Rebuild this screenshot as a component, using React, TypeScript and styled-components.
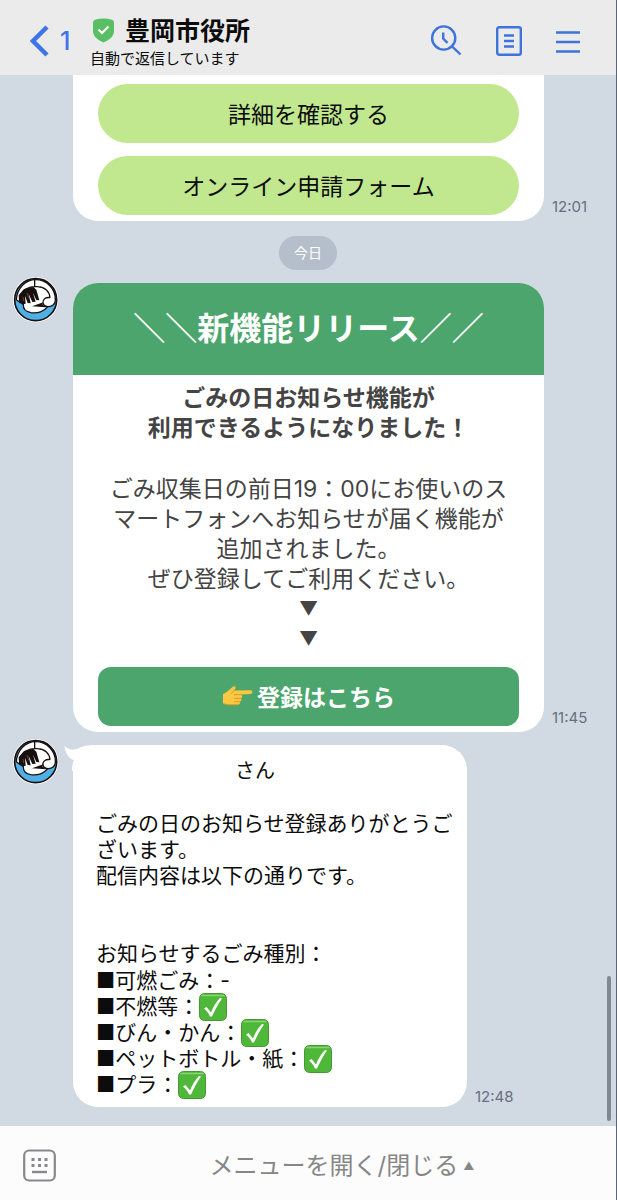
import React from "react";
import styled, { createGlobalStyle } from "styled-components";

const GlobalStyle = createGlobalStyle`
  * { box-sizing: border-box; }
  body {
    margin: 0;
    background: #d1d9e3;
    font-family: Inter, "Noto Sans CJK JP", sans-serif;
    color: #0c0c0c;
  }
  button {
    border: 0;
    padding: 0;
    background: none;
    color: inherit;
    font: inherit;
    cursor: pointer;
  }
  h1, p, ul { margin: 0; padding: 0; }
  svg { display: block; flex: none; }
`;

const Screen = styled.div`
  position: relative;
  display: flex;
  flex-direction: column;
  min-height: 100vh;
  background: #d1d9e3;
  border-right: 1px solid #5c6573;
`;

const Header = styled.header`
  display: flex;
  align-items: center;
  height: 75px;
  padding: 6px 36px 0 30px;
  background: #ebebeb;
`;

const BackButton = styled.button`
  display: flex;
  align-items: center;
  gap: 11px;
  width: 60px;
  font-size: 25px;
  font-weight: 500;
  line-height: 32px;
  color: #3d74e8;
`;

const Account = styled.div`
  flex: 1;
  min-width: 0;
  padding-top: 4px;
`;

const TitleRow = styled.div`
  display: flex;
  align-items: center;
  gap: 10px;
  padding-left: 2px;
`;

const Title = styled.h1`
  font-size: 25px;
  font-weight: 700;
  line-height: 32px;
  white-space: nowrap;
`;

const Subtitle = styled.p`
  font-size: 15px;
  line-height: 24px;
  white-space: nowrap;
`;

const Actions = styled.nav`
  display: flex;
  align-items: center;
  gap: 34px;
`;

const IconButton = styled.button`
  display: flex;
`;

const Chat = styled.main`
  flex: 1;
  padding-bottom: 19px;
`;

const MessageRow = styled.div<{ $gap?: number }>`
  display: flex;
  align-items: stretch;
  margin-top: ${(p) => p.$gap ?? 0}px;
`;

const AvatarSlot = styled.div`
  flex: none;
  width: 73px;
  padding-left: 13px;
`;

const Card = styled.section<{ $continued?: boolean }>`
  flex: 1;
  min-width: 0;
  margin-top: ${(p) => (p.$continued ? 0 : 6)}px;
  padding-bottom: 6px;
  overflow: hidden;
  background: #fff;
  border-radius: ${(p) => (p.$continued ? "0 0 25px 25px" : "25px")};
`;

const CardActions = styled.div`
  display: flex;
  flex-direction: column;
  gap: 13px;
  padding: 9px 25px 0;
`;

const PillButton = styled.button`
  height: 59px;
  padding-bottom: 2px;
  border-radius: 30px;
  background: #c1e88f;
  font-size: 23px;
`;

const Time = styled.time<{ $inset?: number }>`
  flex: none;
  align-self: flex-end;
  width: 72px;
  padding: 0 0 ${(p) => p.$inset ?? 5}px 8px;
  font-size: 15px;
  line-height: 18px;
  color: #66707e;
`;

const DateChip = styled.div`
  width: 58px;
  margin: 15px auto 0;
  border-radius: 17px;
  background: #b5becb;
  color: #fff;
  font-size: 14px;
  line-height: 34px;
  text-align: center;
`;

const Banner = styled.div`
  height: 92px;
  background: #4ba56d;
  color: #fff;
  font-size: 32px;
  font-weight: 700;
  line-height: 92px;
  text-align: center;
  white-space: nowrap;
`;

const CardText = styled.div`
  padding: 8px 25px 13px;
  color: #444;
  font-size: 23px;
  line-height: 30px;
  text-align: center;
`;

const Lead = styled.p`
  margin-bottom: 31px;
  font-weight: 700;
`;

const Arrow = styled.p`
  font-size: 19px;
`;

const RegisterButton = styled.button`
  display: flex;
  align-items: center;
  justify-content: center;
  gap: 4px;
  width: calc(100% - 50px);
  height: 59px;
  margin: 0 25px;
  padding-bottom: 2px;
  border-radius: 13px;
  background: #4ba56d;
  color: #fff;
  font-size: 23px;
  font-weight: 700;
`;

const Bubble = styled.section`
  position: relative;
  flex: 0 1 394px;
  margin-top: 6px;
  padding: 13px 8px 9px 23px;
  background: #fff;
  border-radius: 25px;
  font-size: 21px;
  line-height: 26px;
`;

const Tail = styled.svg`
  position: absolute;
  top: 0;
  left: -9px;
`;

const NameLine = styled.p`
  padding-left: 139px;
  font-size: 20px;
`;

const Notice = styled.p`
  margin: 27px 0 52px;
`;

const WasteList = styled.ul`
  padding-top: 1px;
  list-style: none;
`;

const WasteItem = styled.li`
  display: flex;
  align-items: center;
  height: 26px;
  white-space: nowrap;
`;

const ScrollThumb = styled.div`
  position: absolute;
  right: 5px;
  bottom: 79px;
  width: 4px;
  height: 145px;
  border-radius: 2px;
  background: #7f8894;
`;

const Footer = styled.footer`
  display: flex;
  align-items: center;
  height: 74px;
  padding-left: 23px;
  padding-top: 4px;
  background: #fcfcfd;
  color: #868686;
`;

const MenuToggle = styled.button`
  flex: 1;
  display: flex;
  align-items: center;
  justify-content: center;
  gap: 5px;
  padding: 2px 0 0 12px;
  font-size: 24px;
  line-height: 36px;
`;

const SmallMark = styled.span`
  font-size: 11px;
`;

const Avatar = () => (
  <svg width="46" height="46" viewBox="0 0 138 138" role="img" aria-label="豊岡市役所">
    <circle cx="68" cy="68" r="68" fill="#fff" />
    <circle cx="68" cy="68" r="63" fill="#4fb0e6" />
    <path
      d="M10 68C12 36 36 8 68 8C102 8 128 36 127 68C128 80 118 90 104 89C94 103 74 110 54 107C38 104 30 94 31 82L18 74Z"
      fill="#fff"
      stroke="#17100f"
      strokeWidth="4"
    />
    <path d="M65 7V30M22 54C32 36 52 27 74 29C96 30 110 44 111 62" fill="none" stroke="#17100f" strokeWidth="4" />
    <path d="M111 62C98 60 88 67 90 78C92 86 98 89 106 89" fill="none" stroke="#17100f" strokeWidth="4" />
    <path
      d="M17 55L33 36L60 29L70 38L79 70L70 69L60 47L68 74L58 75L47 51L53 79L44 78L36 56L38 80L29 82L18 76Z"
      fill="#17100f"
    />
    <path d="M30 60L32 72M42 48L47 64" stroke="#8a5a44" strokeWidth="2" />
    <path d="M57 88L91 76L88 82L98 91Z" fill="#17100f" />
    <circle cx="68" cy="68" r="63" fill="none" stroke="#17100f" strokeWidth="5" />
  </svg>
);

const Check = () => (
  <svg width="28" height="28" viewBox="0 0 28 28" role="img" aria-label="済">
    <rect x="0.5" y="0.5" width="27" height="27" rx="5" fill="#4fb83a" stroke="#45992f" />
    <path d="M3 2.5H25" stroke="#8ad475" strokeWidth="1.5" strokeLinecap="round" />
    <path d="M5 15.500L7.500 14L12 19.500C14 14 17 9 21 5L23 5.500C19 11 16 17 13 23.500H11C9.500 20 7.500 17.800 5 15.500Z" fill="#fff" />
  </svg>
);

const Hand = () => (
  <svg width="31" height="21" viewBox="0 0 31 21" aria-hidden="true">
    <path
      d="M1 9C4 8 7 5 10 2.500C12 .5 14 1 13.500 3C13.200 4.500 12 5 12 5.500L28.500 5.200C31 5.200 31 8.800 28.500 9L19 9.500C20.500 10.500 20.500 12.500 19 13.200C20 14.500 19.500 16 18 16.600C18.500 18.500 17.500 19.800 15.500 19.800H8C5 19.800 3 19 1 18.500Z"
      fill="#fcc842"
    />
    <path d="M12 5.500C11 7 10 8 9 8.600M12 9.700H19M12 13.300H19M12 16.700H18M1 18.500C4 19.500 6 19.800 9 19.800H15.500" fill="none" stroke="#dc972e" strokeWidth="1" />
  </svg>
);

const wasteTypes = [
  { name: "可燃ごみ", enabled: false },
  { name: "不燃等", enabled: true },
  { name: "びん・かん", enabled: true },
  { name: "ペットボトル・紙", enabled: true },
  { name: "プラ", enabled: true },
];

export default function App() {
  return (
    <Screen lang="ja">
      <GlobalStyle />
      <Header>
        <BackButton aria-label="戻る">
          <svg width="19" height="32" viewBox="0 0 19 32" fill="none" stroke="currentColor" strokeWidth="4.500">
            <path d="M17 2L3 16L17 30" />
          </svg>
          1
        </BackButton>
        <Account>
          <TitleRow>
            <svg width="23" height="25" viewBox="0 0 23 25">
              <path d="M3 1.800Q11.500 -1 20 1.800Q22 2.400 22 4.500V13C22 18.500 17 22 11.500 24.500C6 22 1 18.500 1 13V4.500Q1 2.400 3 1.800Z" fill="#58bf63" />
              <path d="M6.500 11.500L10 15L16.500 8.500" fill="none" stroke="#fff" strokeWidth="2.200" />
            </svg>
            <Title>豊岡市役所</Title>
          </TitleRow>
          <Subtitle>自動で返信しています</Subtitle>
        </Account>
        <Actions>
          <IconButton aria-label="検索">
            <svg width="32" height="32" viewBox="0 0 32 32" fill="none" stroke="#3d74dc" strokeWidth="2.400">
              <circle cx="13.700" cy="13" r="11.600" />
              <path d="M22 21.300L30.500 29.500M13.200 7.500V13.500L17.500 17.800" />
            </svg>
          </IconButton>
          <IconButton aria-label="ノート">
            <svg width="26" height="30" viewBox="0 0 26 30" fill="none" stroke="#3d74dc" strokeWidth="2.400">
              <rect x="1.200" y="1.200" width="23.600" height="27.600" rx="2" />
              <path d="M8 9.500H18M8 15H18M8 20.500H18" />
            </svg>
          </IconButton>
          <IconButton aria-label="メニュー">
            <svg width="24" height="24" viewBox="0 0 24 24" fill="none" stroke="#3d74dc" strokeWidth="2.600">
              <path d="M0 3.500H24M0 13H24M0 22.500H24" />
            </svg>
          </IconButton>
        </Actions>
      </Header>

      <Chat>
        <MessageRow>
          <AvatarSlot />
          <Card $continued>
            <CardActions>
              <PillButton>詳細を確認する</PillButton>
              <PillButton>オンライン申請フォーム</PillButton>
            </CardActions>
          </Card>
          <Time>12:01</Time>
        </MessageRow>

        <DateChip>今日</DateChip>

        <MessageRow $gap={7}>
          <AvatarSlot>
            <Avatar />
          </AvatarSlot>
          <Card>
            <Banner>＼＼新機能リリース／／</Banner>
            <CardText>
              <Lead>
                ごみの日お知らせ機能が
                <br />
                利用できるようになりました！
              </Lead>
              <p>
                ごみ収集日の前日19：00にお使いのス
                <br />
                マートフォンへお知らせが届く機能が
                <br />
                追加されました。
                <br />
                ぜひ登録してご利用ください。
              </p>
              <Arrow>▼</Arrow>
              <Arrow>▼</Arrow>
            </CardText>
            <RegisterButton>
              <Hand />
              登録はこちら
            </RegisterButton>
          </Card>
          <Time>11:45</Time>
        </MessageRow>

        <MessageRow $gap={7}>
          <AvatarSlot>
            <Avatar />
          </AvatarSlot>
          <Bubble>
            <Tail width="34" height="26" viewBox="0 0 34 26" aria-hidden="true">
              <path d="M0.500 1C5 5 10 6 16 2.500C20 0.500 26 0 34 0V20L8 26C8 21 8.500 18 10 15C5 14 1 8 0.500 1Z" fill="#fff" />
            </Tail>
            <NameLine>さん</NameLine>
            <Notice>
              ごみの日のお知らせ登録ありがとうご
              <br />
              ざいます。
              <br />
              配信内容は以下の通りです。
            </Notice>
            <p>お知らせするごみ種別：</p>
            <WasteList>
              {wasteTypes.map((type) => (
                <WasteItem key={type.name}>
                  ■{type.name}：{type.enabled ? <Check /> : "-"}
                </WasteItem>
              ))}
            </WasteList>
          </Bubble>
          <Time $inset={1}>12:48</Time>
        </MessageRow>
      </Chat>

      <Footer>
        <IconButton aria-label="キーボード">
          <svg width="33" height="33" viewBox="0 0 33 33" fill="none" stroke="#88888b" strokeWidth="2.200">
            <rect x="1.200" y="1.500" width="30.600" height="30" rx="5" />
            <path d="M8.500 10.500H11.500M15 10.500H18M21.500 10.500H24.500M8.500 16.500H11.500M15 16.500H18M21.500 16.500H24.500" strokeWidth="3" />
            <path d="M9 23H24" strokeWidth="2.400" />
          </svg>
        </IconButton>
        <MenuToggle>
          メニューを開く/閉じる
          <SmallMark>▲</SmallMark>
        </MenuToggle>
      </Footer>
      <ScrollThumb />
    </Screen>
  );
}
